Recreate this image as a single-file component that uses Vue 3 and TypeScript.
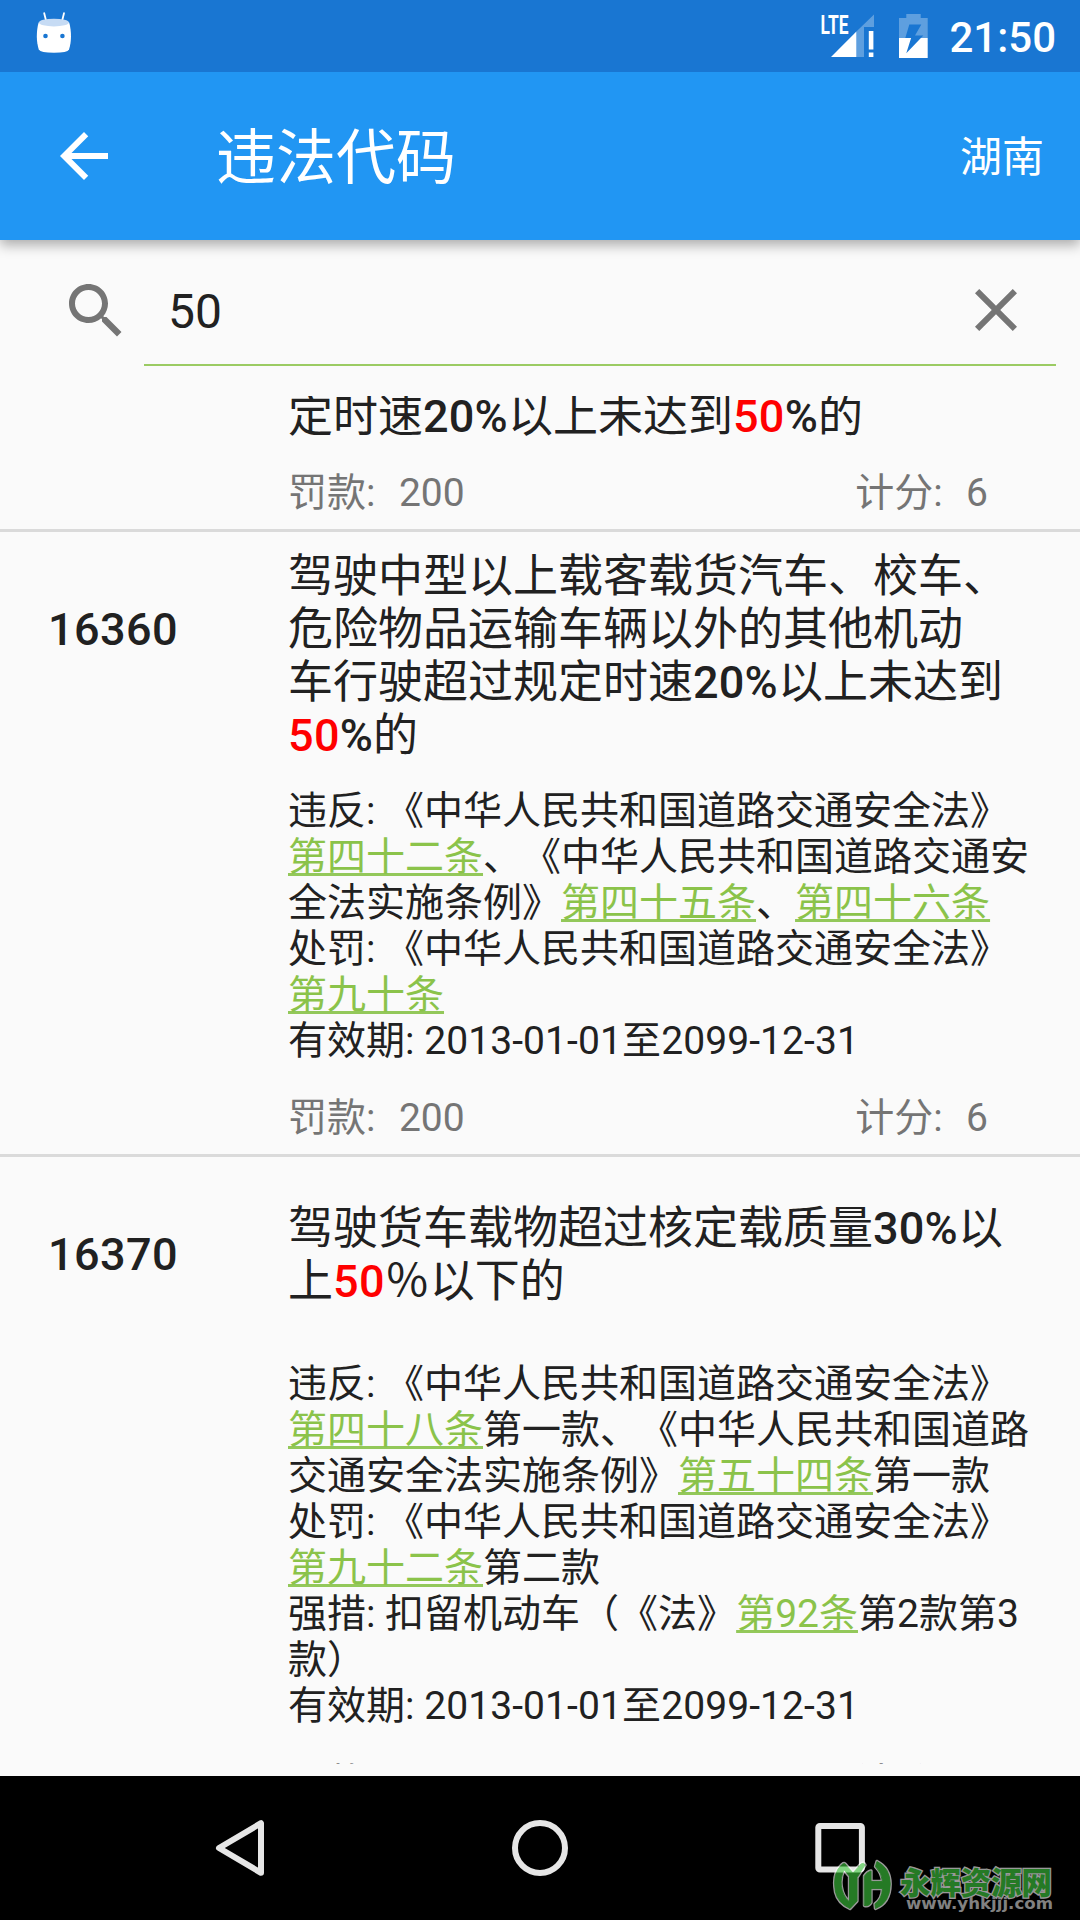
<script setup lang="ts">
type Kind = 'num' | 'hit' | 'link' | 'date'
interface Run { t: string; k?: Kind }
type Line = Run[]
interface Violation {
  code: string
  title: Line[]
  detail: Line[]
  fine: string
  points: string
  partial?: boolean
}

const p = (t: string): Run => ({ t })
const n = (t: string): Run => ({ t, k: 'num' })
const hit = (t: string): Run => ({ t, k: 'hit' })
const link = (t: string): Run => ({ t, k: 'link' })
const date = (t: string): Run => ({ t, k: 'date' })

const query = '50'

const items: Violation[] = [
  {
    code: '',
    title: [[p('定时速'), n('20%'), p('以上未达到'), hit('50'), n('%'), p('的')]],
    detail: [],
    fine: '200',
    points: '6',
    partial: true,
  },
  {
    code: '16360',
    title: [
      [p('驾驶中型以上载客载货汽车、校车、')],
      [p('危险物品运输车辆以外的其他机动')],
      [p('车行驶超过规定时速'), n('20%'), p('以上未达到')],
      [hit('50'), n('%'), p('的')],
    ],
    detail: [
      [p('违反: 《中华人民共和国道路交通安全法》')],
      [link('第四十二条'), p('、《中华人民共和国道路交通安')],
      [p('全法实施条例》'), link('第四十五条'), p('、'), link('第四十六条')],
      [p('处罚: 《中华人民共和国道路交通安全法》')],
      [link('第九十条')],
      [p('有效期: '), date('2013-01-01至2099-12-31')],
    ],
    fine: '200',
    points: '6',
  },
  {
    code: '16370',
    title: [
      [p('驾驶货车载物超过核定载质量'), n('30%'), p('以')],
      [p('上'), hit('50'), p('％以下的')],
    ],
    detail: [
      [p('违反: 《中华人民共和国道路交通安全法》')],
      [link('第四十八条'), p('第一款、《中华人民共和国道路')],
      [p('交通安全法实施条例》'), link('第五十四条'), p('第一款')],
      [p('处罚: 《中华人民共和国道路交通安全法》')],
      [link('第九十二条'), p('第二款')],
      [p('强措: 扣留机动车（《法》'), link('第92条'), p('第2款第3')],
      [p('款）')],
      [p('有效期: '), date('2013-01-01至2099-12-31')],
    ],
    fine: '200',
    points: '6',
  },
]

const markLayers = [
  { color: '#fff', width: 3.4 },
  { color: '#3fcb3f', width: 0.9 },
]
</script>

<template>
  <div class="screen">
    <header class="status">
      <svg class="droid" width="36" height="44" viewBox="36 11 36 44">
        <path d="M44.2 13.2l2 8M64 13.2l-2 8" stroke="#fff" stroke-width="1.8" stroke-linecap="round" />
        <path d="M38.6 22.5Q54 18.5 69.2 22.5C71.6 31 71.6 42 69 49.5Q67.5 52.8 54 52.8T38.8 49.5C36.2 42 36.2 31 38.6 22.5Z" fill="#fff" />
        <ellipse cx="53.9" cy="22.6" rx="15" ry="3.9" fill="#c6dbf4" />
        <circle cx="45.5" cy="36" r="2.3" fill="#1976d2" />
        <circle cx="62.4" cy="36" r="2.3" fill="#1976d2" />
      </svg>
      <div class="status-right">
        <svg width="110" height="48" viewBox="821 12 110 48">
          <text x="820.5" y="33.5" font-size="26" font-weight="700" fill="#fff" textLength="28" lengthAdjust="spacingAndGlyphs">LTE</text>
          <path d="M856.4 31.6L874 14.4V27H864V57H856.4Z" fill="#fff" fill-opacity=".3" />
          <path d="M831 57L856.4 31.6V57Z" fill="#fff" />
          <path d="M868.8 31h4.6v18.4h-4.6zM868.8 52.6h4.6v4.4h-4.6z" fill="#fff" />
          <path d="M906.3 14h14.4v4H927.7V38H899V18h7.3z" fill="#fff" fill-opacity=".3" />
          <path d="M899 38h28.7v20H899z" fill="#fff" />
          <path d="M909.3 24.6h12l-6.3 11h8.3L906.3 53.3l4.8-15.3h-5.8z" fill="#1976d2" />
        </svg>
        <span class="clock">21:50</span>
      </div>
    </header>

    <div class="toolbar">
      <svg width="72" height="72" viewBox="0 0 24 24" fill="#fff">
        <path d="M20 11H7.83l5.59-5.59L12 4l-8 8 8 8 1.41-1.41L7.83 13H20v-2z" />
      </svg>
      <h1>违法代码</h1>
      <span class="region">湖南</span>
    </div>

    <div class="search">
      <svg class="lens" width="72" height="72" viewBox="0 0 24 24" fill="#757575">
        <path d="M15.5 14h-.79l-.28-.27C15.41 12.59 16 11.11 16 9.5 16 5.91 13.09 3 9.5 3S3 5.91 3 9.5 5.91 16 9.5 16c1.61 0 3.09-.59 4.23-1.57l.27.28v.79l5 4.99L20.49 19l-4.99-5zm-6 0C7.01 14 5 11.99 5 9.5S7.01 5 9.5 5 14 7.01 14 9.5 11.99 14 9.5 14z" />
      </svg>
      <div class="field">
        <span>{{ query }}</span>
        <svg width="72" height="72" viewBox="0 0 24 24" fill="#757575">
          <path d="M19 6.41L17.59 5 12 10.59 6.41 5 5 6.41 10.59 12 5 17.59 6.41 19 12 13.41 17.59 19 19 17.59 13.41 12z" />
        </svg>
      </div>
    </div>

    <main class="list">
      <article v-for="(item, i) in items" :key="i" class="item" :class="{ partial: item.partial }">
        <div class="code">{{ item.code }}</div>
        <div class="body">
          <div class="title">
            <div v-for="(line, l) in item.title" :key="l"><span v-for="(r, k) in line" :key="k" :class="r.k">{{ r.t }}</span></div>
          </div>
          <div v-if="item.detail.length" class="detail">
            <div v-for="(line, l) in item.detail" :key="l"><span v-for="(r, k) in line" :key="k" :class="r.k">{{ r.t }}</span></div>
          </div>
          <div class="foot">
            <div class="pair"><span>罚款:</span><span>{{ item.fine }}</span></div>
            <div class="pair"><span>计分:</span><span>{{ item.points }}</span></div>
          </div>
        </div>
      </article>
    </main>

    <nav class="nav">
      <svg width="60" height="60" viewBox="0 0 60 60"><path d="M51 5.2V54.8L9 30Z" /></svg>
      <svg width="60" height="60" viewBox="0 0 60 60"><circle cx="30" cy="30" r="25" /></svg>
      <svg width="60" height="60" viewBox="0 0 60 60"><rect x="8.3" y="8" width="43.6" height="43.6" rx="1.6" /></svg>
    </nav>

    <svg class="mark" width="240" height="70" viewBox="830 1850 240 70">
      <g opacity=".6">
        <g stroke-linecap="round" stroke-linejoin="round">
          <g v-for="s in markLayers" :key="s.color" :stroke="s.color" :fill="s.color" :stroke-width="s.width">
            <path d="M845 1864L853 1873L861 1864Q864 1862 865 1865L857 1877.500V1901L850 1908.500Q838 1903 835.500 1892Q832 1873 842 1864.500Q844 1863 845 1864ZM844 1870C839 1879 840 1894 849.500 1902V1876.500Z" fill-rule="evenodd" />
            <path d="M864.500 1876Q867 1872 871 1871V1881.500H882.500Q882 1873 875.500 1866.500L877 1861.500Q890 1868 890.200 1884Q890 1903 875.500 1908.500L875 1904Q882 1899 882.500 1888.500H871V1902.500Q869 1906.500 864.500 1905.500Z" />
          </g>
        </g>
        <text class="mark-name" x="900" y="1893.5" textLength="152" lengthAdjust="spacingAndGlyphs">永辉资源网</text>
        <text class="mark-url" x="906" y="1909" textLength="147" lengthAdjust="spacingAndGlyphs">www.yhkjjj.com</text>
      </g>
    </svg>
  </div>
</template>

<style>
body {
  margin: 0;
}
</style>

<style scoped>
.screen {
  position: relative;
  display: flex;
  flex-direction: column;
  width: 1080px;
  height: 1920px;
  overflow: hidden;
  background: #fafafa;
  color: #212121;
  font-family: Roboto, "Noto Sans CJK SC", sans-serif;
  text-spacing-trim: space-all;
}
svg {
  display: block;
  flex: none;
}
.status {
  position: relative;
  z-index: 2;
  display: flex;
  justify-content: space-between;
  height: 72px;
  flex: none;
  background: #1976d2;
  color: #fff;
}
.droid {
  margin: 11px 0 0 36px;
}
.status-right {
  display: flex;
  gap: 18px;
  padding: 12px 24px 0 0;
}
.status-right svg {
  overflow: visible;
}
.clock {
  margin-top: 1px;
  font-size: 42px;
  line-height: 49px;
  font-weight: 500;
}
.toolbar {
  position: relative;
  z-index: 1;
  display: flex;
  align-items: center;
  height: 168px;
  flex: none;
  padding: 0 36px 0 48px;
  box-sizing: border-box;
  background: #2196f3;
  color: #fff;
  box-shadow: 0 5px 12px rgba(0, 0, 0, 0.32);
}
h1 {
  flex: 1;
  margin: 5px 0 0 96px;
  font-size: 60px;
  line-height: 70px;
  font-weight: 400;
}
.region {
  margin-top: 2px;
  font-size: 42px;
  line-height: 49px;
}
.search {
  display: flex;
  height: 156px;
  flex: none;
  padding-right: 24px;
}
.lens {
  margin: 35px 12px 0 60px;
}
.field {
  flex: 1;
  display: flex;
  justify-content: space-between;
  align-items: flex-start;
  height: 126px;
  padding: 34px 24px 0 24px;
  box-sizing: border-box;
  border-bottom: 2px solid #9bcb63;
}
.field span {
  font-size: 48px;
  line-height: 56px;
  margin-top: 10px;
}
.list {
  height: 1368px;
  flex: none;
  overflow: hidden;
}
.item {
  display: flex;
  border-bottom: 3px solid #dadada;
}
.item.partial {
  margin-top: -24px;
}
.code {
  width: 240px;
  height: 194px;
  flex: none;
  padding-left: 48px;
  font-size: 45px;
  line-height: 196px;
  font-weight: 500;
  letter-spacing: 0.4px;
}
.partial .code,
.partial .title {
  height: auto;
  min-height: 0;
}
.body {
  flex: 1;
  white-space: pre;
}
.title {
  display: flex;
  flex-direction: column;
  justify-content: center;
  min-height: 196px;
  padding: 18px 0;
  box-sizing: border-box;
  font-size: 45px;
  line-height: 53px;
}
.detail {
  margin: 8px 0 22px;
  font-size: 39px;
  line-height: 46px;
}
.foot {
  display: flex;
  justify-content: space-between;
  padding: 9px 92px 13px 0;
  font-size: 39px;
  line-height: 46px;
  color: #757575;
}
.pair {
  display: flex;
  gap: 23.5px;
}
.num {
  font-weight: 500;
  letter-spacing: 0.2px;
}
.hit {
  font-weight: 500;
  letter-spacing: 0.3px;
  color: #f00;
}
.date {
  letter-spacing: 0.1px;
}
.link {
  color: #8bc34a;
  text-decoration: underline;
  text-decoration-color: #93c85a;
  text-decoration-thickness: 3px;
  text-decoration-skip-ink: none;
  text-underline-offset: 3px;
}
.nav {
  display: flex;
  justify-content: center;
  gap: 240px;
  height: 144px;
  flex: none;
  margin-top: 12px;
  align-items: center;
  background: #000;
}
.nav svg {
  fill: none;
  stroke: #e6e6e6;
  stroke-width: 6;
  stroke-linejoin: round;
}
.mark {
  position: absolute;
  left: 830px;
  top: 1850px;
}
.mark-name {
  font: 900 31px "Noto Sans CJK SC", sans-serif;
  fill: #3fcb3f;
  stroke: #fff;
  stroke-width: 2.6px;
  paint-order: stroke;
}
.mark-url {
  font: 700 15px "DejaVu Sans", sans-serif;
  fill: #d8d8d8;
}
</style>
